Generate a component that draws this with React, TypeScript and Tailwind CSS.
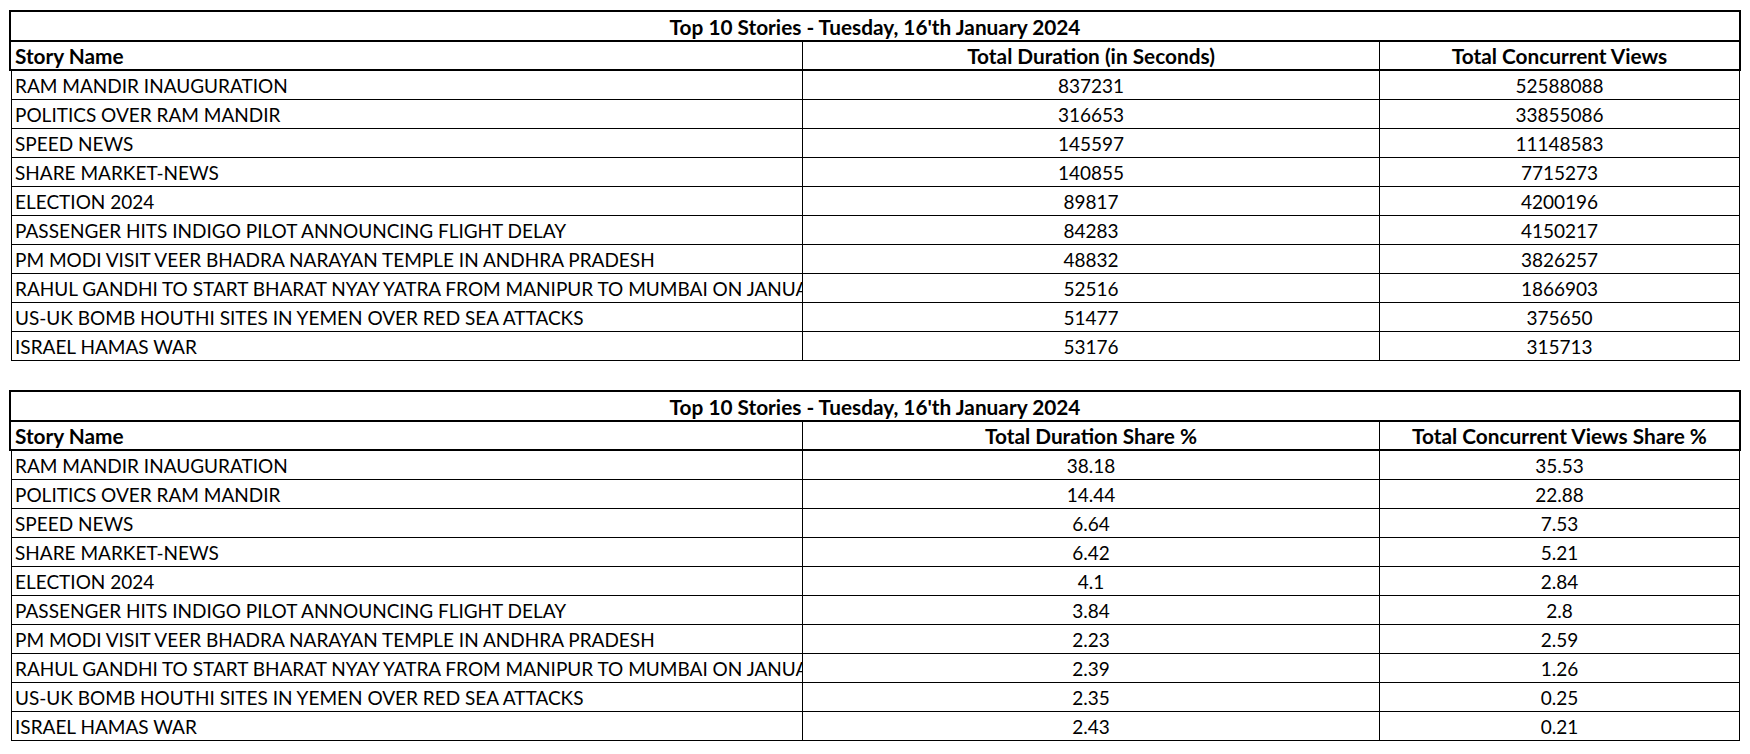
const title = "Top 10 Stories - Tuesday, 16'th January 2024";

const stories = [
  "RAM MANDIR INAUGURATION",
  "POLITICS OVER RAM MANDIR",
  "SPEED NEWS",
  "SHARE MARKET-NEWS",
  "ELECTION 2024",
  "PASSENGER HITS INDIGO PILOT ANNOUNCING FLIGHT DELAY",
  "PM MODI VISIT VEER BHADRA NARAYAN TEMPLE IN ANDHRA PRADESH",
  "RAHUL GANDHI TO START BHARAT NYAY YATRA FROM MANIPUR TO MUMBAI ON JANUARY 14",
  "US-UK BOMB HOUTHI SITES IN YEMEN OVER RED SEA ATTACKS",
  "ISRAEL HAMAS WAR",
];

const totals = {
  duration: ["837231", "316653", "145597", "140855", "89817", "84283", "48832", "52516", "51477", "53176"],
  views: ["52588088", "33855086", "11148583", "7715273", "4200196", "4150217", "3826257", "1866903", "375650", "315713"],
};

const shares = {
  duration: ["38.18", "14.44", "6.64", "6.42", "4.1", "3.84", "2.23", "2.39", "2.35", "2.43"],
  views: ["35.53", "22.88", "7.53", "5.21", "2.84", "2.8", "2.59", "1.26", "0.25", "0.21"],
};

function StoryTable({
  colTwo,
  colThree,
  valuesTwo,
  valuesThree,
}: {
  colTwo: string;
  colThree: string;
  valuesTwo: string[];
  valuesThree: string[];
}) {
  return (
    <div className="w-[1732px]">
      {/* merged title + header block, medium border like the sheet */}
      <div className="border-2 border-black text-[20.8px] font-bold">
        <div className="flex h-[30px] items-center justify-center border-b-2 border-black pt-[1px]">
          {title}
        </div>
        <div className="flex h-[27px] items-center">
          <div className="flex h-full w-[792px] items-center border-r border-black pl-[4px] pt-[1px]">Story Name</div>
          <div className="flex h-full w-[577px] items-center justify-center border-r border-black pt-[1px]">{colTwo}</div>
          <div className="flex h-full flex-1 items-center justify-center pt-[1px]">{colThree}</div>
        </div>
      </div>
      <div className="ml-[2px] mr-[1px] border-x border-black">
        {stories.map((story, i) => (
          <div key={story} className="flex h-[29px] border-b border-black leading-[29px]">
            <div className="w-[791px] overflow-hidden whitespace-nowrap border-r border-black pl-[3px]">
              {story}
            </div>
            <div className="w-[577px] border-r border-black text-center">{valuesTwo[i]}</div>
            <div className="flex-1 text-center">{valuesThree[i]}</div>
          </div>
        ))}
      </div>
    </div>
  );
}

export default function App() {
  return (
    <div className="min-h-screen bg-white pl-[9px] pt-[10px] font-['Lato',sans-serif] text-[19px] text-black">
      <StoryTable
        colTwo="Total Duration (in Seconds)"
        colThree="Total Concurrent Views"
        valuesTwo={totals.duration}
        valuesThree={totals.views}
      />
      <div className="h-[29px]" />
      <StoryTable
        colTwo="Total Duration Share %"
        colThree="Total Concurrent Views Share %"
        valuesTwo={shares.duration}
        valuesThree={shares.views}
      />
    </div>
  );
}
